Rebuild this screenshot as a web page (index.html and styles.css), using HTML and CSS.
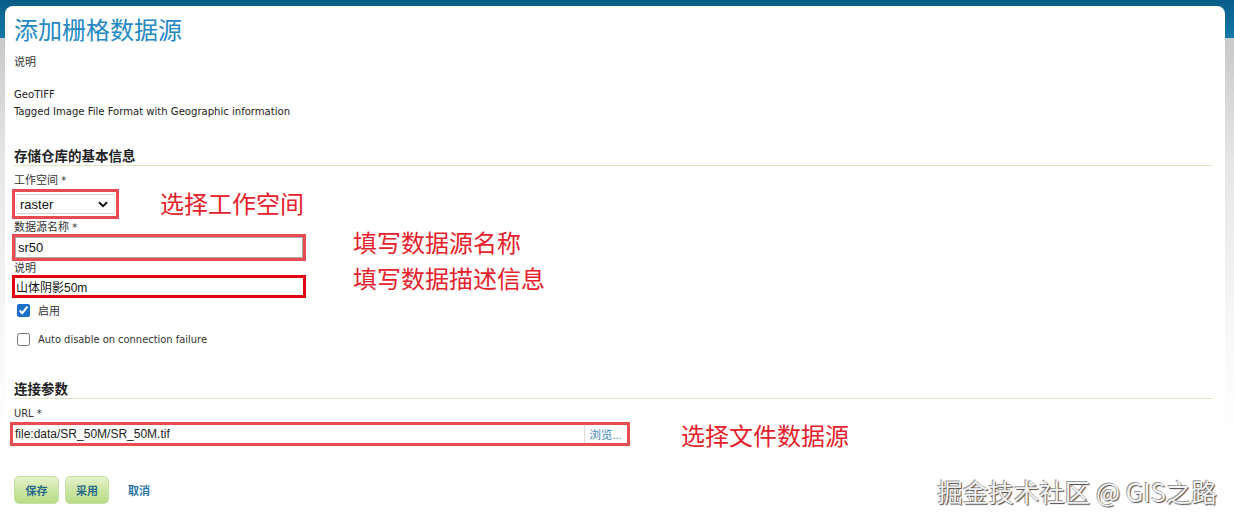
FILE: index.html
```html
<!DOCTYPE html>
<html lang="zh-CN">
<head>
<meta charset="utf-8">
<title>添加栅格数据源</title>
<link rel="stylesheet" href="styles.css">
</head>
<body>
<div class="page">
  <div class="panel">
    <h1 class="title">添加栅格数据源</h1>
    <p class="small-label">说明</p>
    <div class="desc">
      <div>GeoTIFF</div>
      <div>Tagged Image File Format with Geographic information</div>
    </div>

    <h2 class="section">存储仓库的基本信息</h2>

    <div class="label lbl-first">工作空间 *</div>
    <div class="box-row">
      <div class="redbox redbox-sel">
        <div class="select">
          <span>raster</span>
          <svg class="chev" width="10" height="7" viewBox="0 0 10 7"><path d="M1 1.2 L5 5.2 L9 1.2" fill="none" stroke="#111" stroke-width="2"/></svg>
        </div>
      </div>
      <span class="anno anno-ws">选择工作空间</span>
    </div>

    <div class="label lbl-tight">数据源名称 *</div>
    <div class="box-row">
      <div class="redbox redbox-name">
        <div class="input input-name">sr50</div>
      </div>
      <span class="anno anno-name">填写数据源名称</span>
    </div>

    <div class="label">说明</div>
    <div class="box-row">
      <div class="redbox redbox-desc">
        <div class="input input-desc">山体阴影50m</div>
      </div>
      <span class="anno anno-desc">填写数据描述信息</span>
    </div>

    <div class="check-row">
      <input type="checkbox" class="cb" checked>
      <span>启用</span>
    </div>
    <div class="check-row check-row-2">
      <input type="checkbox" class="cb">
      <span>Auto disable on connection failure</span>
    </div>

    <h2 class="section section-2">连接参数</h2>

    <div class="label lbl-first">URL *</div>
    <div class="box-row">
      <div class="redbox redbox-url">
        <div class="url-field">
          <span class="url-text">file:data/SR_50M/SR_50M.tif</span>
          <span class="browse">浏览...</span>
        </div>
      </div>
      <span class="anno anno-url">选择文件数据源</span>
    </div>

    <div class="buttons">
      <button class="btn btn-save">保存</button>
      <button class="btn btn-apply">采用</button>
      <a class="cancel">取消</a>
    </div>
  </div>
  <div class="watermark">掘金技术社区 @ GIS之路</div>
</div>
</body>
</html>
```

FILE: styles.css
```css
html, body {
  margin: 0;
  padding: 0;
}

body {
  width: 1234px;
  height: 525px;
  overflow: hidden;
  font-family: "Liberation Sans", "Noto Sans CJK SC", sans-serif;
  color: #222;
  background: linear-gradient(to bottom,
    #075d87 0px, #1478a8 38px,
    #c9c9c9 38px, #e6e6e6 160px, #f7f7f7 320px, #ffffff 440px);
}

.page {
  position: relative;
  height: 525px;
  padding: 6px 9px 0 5px;
  box-sizing: border-box;
}

.panel {
  background: #fff;
  border-radius: 8px 8px 0 0;
  height: 519px;
  box-sizing: border-box;
  padding: 8px 13px 0 9px;
}

.title {
  margin: 0;
  font-family: "Noto Sans CJK SC", sans-serif;
  font-weight: normal;
  font-size: 24px;
  line-height: 30px;
  color: #2388c4;
}

.small-label {
  margin: 10px 0 0;
  font-size: 11px;
  line-height: 16px;
  color: #333;
}

.desc {
  margin-top: 16px;
  font-family: "DejaVu Sans Condensed", "DejaVu Sans", sans-serif;
  font-size: 11.2px;
  line-height: 17px;
  color: #222;
}

.section {
  margin: 26px 0 0;
  padding-bottom: 1px;
  border-bottom: 1px solid #dfe6c6;
  font-family: "Noto Sans CJK SC", sans-serif;
  font-size: 13.5px;
  font-weight: bold;
  line-height: 18px;
  color: #222;
}

.section-2 {
  margin-top: 28px;
}

.label {
  font-family: "DejaVu Sans Condensed", "Noto Sans CJK SC", sans-serif;
  font-size: 11px;
  line-height: 12px;
  padding-top: 2px;
  color: #333;
}

.lbl-first {
  margin-top: 7px;
}

.lbl-tight {
  margin-top: 1px;
}

.box-row {
  position: relative;
  display: flex;
}

.lbl-first + .box-row {
  margin-top: 2px;
}

.redbox {
  box-sizing: border-box;
  border: 3px solid #e84b51;
  margin-left: -2px;
}

.redbox-sel {
  width: 107px;
  height: 30px;
  padding: 2px 1px;
}

.select {
  box-sizing: border-box;
  height: 20px;
  border: 1px solid #d4d4d4;
  border-left-color: #f0f0f0;
  border-right-color: #f0f0f0;
  display: flex;
  align-items: center;
  justify-content: space-between;
  padding: 0 6px 0 3px;
  font-size: 13px;
  color: #111;
}

.chev {
  display: block;
}

.redbox-name {
  width: 294px;
  height: 27px;
}

.input {
  box-sizing: border-box;
  height: 100%;
  display: flex;
  align-items: center;
  font-size: 12px;
  color: #111;
}

.input-name {
  border: 1px solid #a9a9a9;
  padding-left: 2px;
  font-size: 13px;
}

.redbox-desc {
  width: 294px;
  height: 23px;
  border-color: #e50012;
}

.input-desc {
  padding-left: 1px;
}

.redbox-url {
  width: 620px;
  height: 24px;
  margin-left: -4px;
}

.url-field {
  height: 100%;
  display: flex;
  align-items: center;
  justify-content: space-between;
  font-size: 12px;
}

.url-text {
  padding-left: 2px;
  color: #222;
}

.browse {
  height: 100%;
  display: flex;
  align-items: center;
  padding: 0 5px 0 4px;
  border-left: 1px solid #dcdcdc;
  color: #3d86ba;
  font-size: 11.5px;
}

.anno {
  position: absolute;
  font-family: "Noto Sans CJK SC", sans-serif;
  font-size: 24px;
  line-height: 26px;
  color: #e5212b;
  white-space: nowrap;
}

.anno-ws { left: 146px; top: 1px; }
.anno-name { left: 339px; top: -5px; }
.anno-desc { left: 339px; top: -10px; }
.anno-url { left: 667px; top: 0px; }

.check-row {
  display: flex;
  align-items: center;
  height: 24px;
  font-family: "DejaVu Sans Condensed", "Noto Sans CJK SC", sans-serif;
  font-size: 11px;
  color: #333;
}

.check-row-2 {
  margin-top: 5px;
}

.cb {
  width: 13px;
  height: 13px;
  margin: 0 8px 0 3px;
  accent-color: #1a6fc9;
}

.buttons {
  margin-top: 30px;
  display: flex;
  align-items: center;
}

.btn {
  box-sizing: border-box;
  height: 28px;
  border: 1px solid #c6dfa2;
  border-radius: 5px;
  background: linear-gradient(to bottom, #e4f2cb 0%, #cbe6a3 50%, #b9dc88 100%);
  font-family: "Noto Sans CJK SC", sans-serif;
  font-size: 11px;
  font-weight: bold;
  color: #2c6a8a;
  padding: 0;
}

.btn-save {
  width: 45px;
}

.btn-apply {
  width: 44px;
  margin-left: 6px;
}

.cancel {
  margin-left: 19px;
  font-family: "Noto Sans CJK SC", sans-serif;
  font-size: 11px;
  font-weight: bold;
  color: #2a75a3;
}

.watermark {
  position: absolute;
  right: 17px;
  top: 473px;
  font-family: "Noto Sans CJK SC", sans-serif;
  font-size: 25.5px;
  line-height: 36px;
  color: #f2f2f2;
  text-shadow: 1px 1px 1px #4a4a4a, -1px -1px 0 #9a9a9a;
  white-space: nowrap;
}
```
